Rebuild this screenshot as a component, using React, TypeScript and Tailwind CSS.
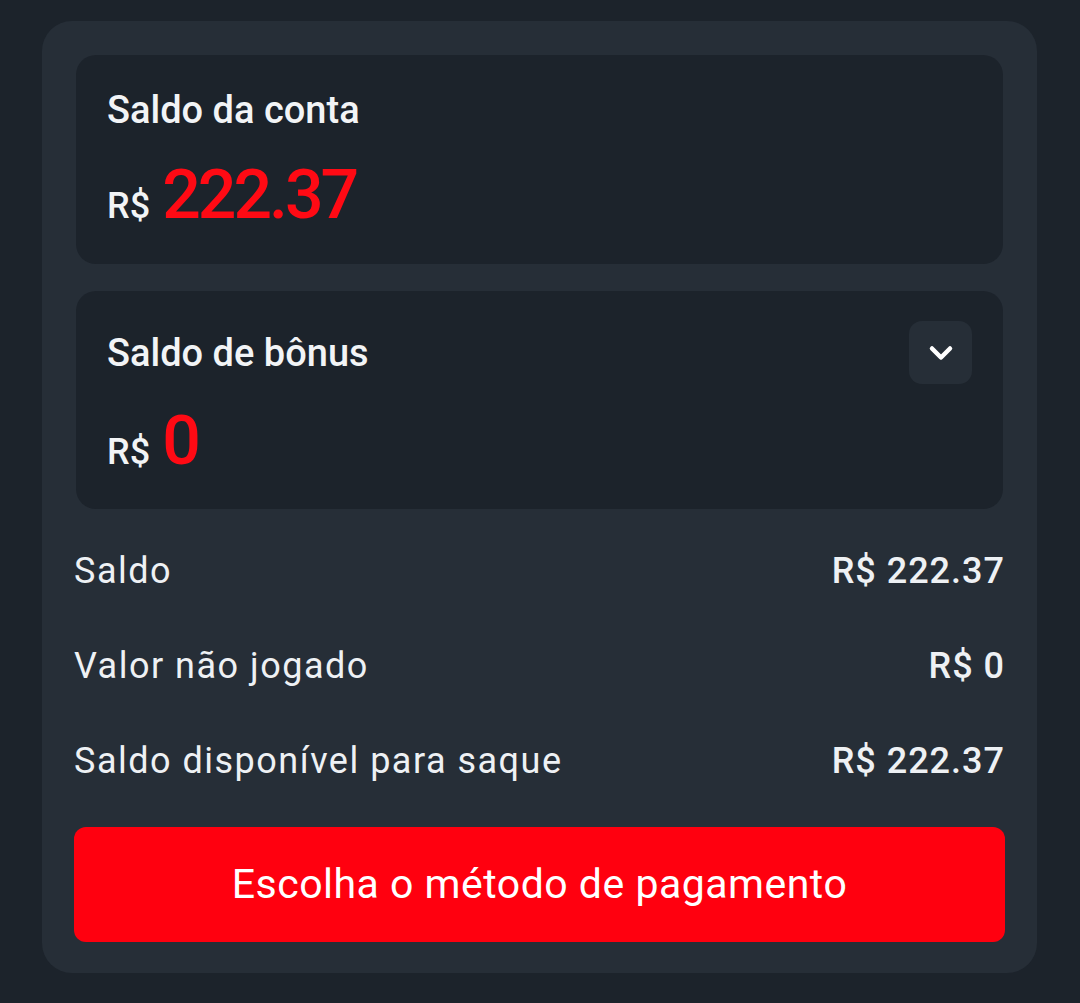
import { ChevronDown } from "lucide-react";

const rows = [
  { label: "Saldo", value: "R$ 222.37" },
  { label: "Valor não jogado", value: "R$ 0" },
  { label: "Saldo disponível para saque", value: "R$ 222.37" },
];

export default function App() {
  return (
    <div className="min-h-[1003px] bg-[#1c232b] px-[42px] pt-[21px] font-['Roboto',sans-serif]">
      <div className="w-[995px] rounded-[30px] bg-[#262e37] px-[32px] pt-[34px] pb-[31px]">
        {/* account balance */}
        <div className="mx-[2px] h-[209px] rounded-[20px] bg-[#1c232b] px-[31px] pt-[35px]">
          <h2 className="text-[38px] leading-[40px] font-medium text-[#f2f4f6]">Saldo da conta</h2>
          <div className="mt-[29px] flex items-baseline gap-[12px]">
            <span className="text-[36px] font-medium text-[#f2f4f6]">R$</span>
            <span className="text-[68px] leading-[72px] font-medium tracking-[-3px] text-[#ff0a14]">222.37</span>
          </div>
        </div>

        {/* bonus balance */}
        <div className="mx-[2px] mt-[27px] h-[218px] rounded-[20px] bg-[#1c232b] px-[31px] pt-[30px]">
          <div className="flex items-center justify-between">
            <h2 className="text-[38px] leading-[40px] font-medium text-[#f2f4f6]">Saldo de bônus</h2>
            <button className="flex h-[63px] w-[63px] items-center justify-center rounded-[13px] bg-[#262e37]">
              <ChevronDown className="h-[36px] w-[36px] text-white" strokeWidth={3} />
            </button>
          </div>
          <div className="mt-[21px] flex items-baseline gap-[12px]">
            <span className="text-[36px] font-medium text-[#f2f4f6]">R$</span>
            <span className="text-[68px] leading-[72px] font-medium text-[#ff0a14]">0</span>
          </div>
        </div>

        {/* summary */}
        <div className="mt-[14px] flex flex-col">
          {rows.map((r) => (
            <div key={r.label} className="flex h-[95px] items-center justify-between">
              <span className="text-[36px] tracking-[1.5px] text-[#eef1f4]">{r.label}</span>
              <span className="text-[36px] font-medium tracking-[1px] text-[#eef1f4]">{r.value}</span>
            </div>
          ))}
        </div>

        <button className="mt-[19px] flex h-[115px] w-full items-center justify-center rounded-[12px] bg-[#ff000f] text-[41px] tracking-[0.5px] text-white">
          Escolha o método de pagamento
        </button>
      </div>
    </div>
  );
}
